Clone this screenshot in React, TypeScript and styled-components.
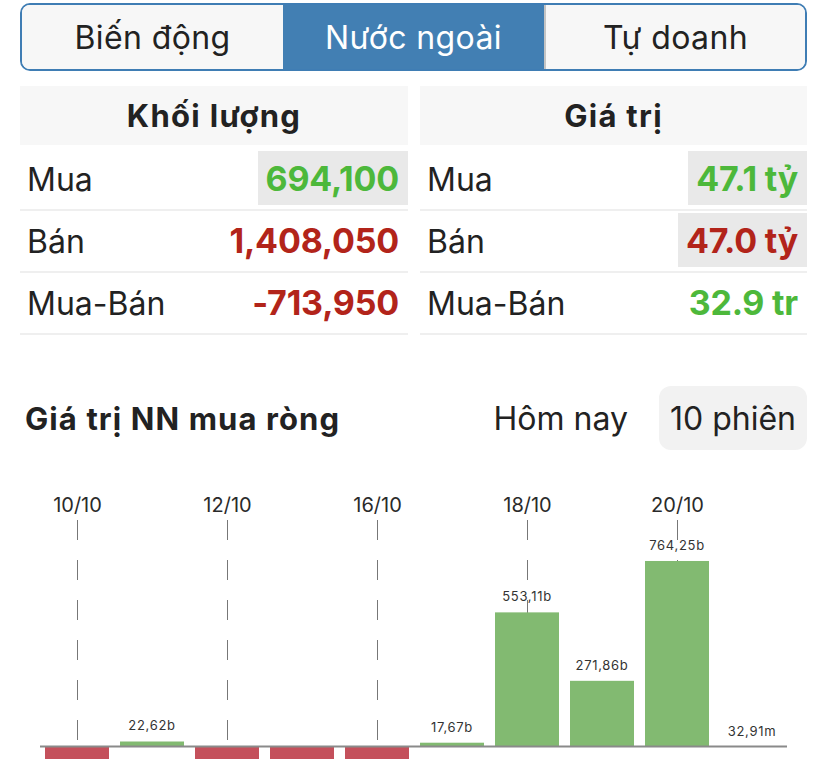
import React from "react";
import styled, { createGlobalStyle } from "styled-components";

const Global = createGlobalStyle`
  html, body { margin: 0; padding: 0; background: #ffffff; }
  body { font-family: Inter, "Noto Sans", "Liberation Sans", sans-serif; color: #222; }
`;

const Page = styled.div`
  width: 828px;
  display: flex;
  flex-direction: column;
  padding-top: 3px;
  overflow: hidden;
`;

const Tabs = styled.div`
  margin: 0 21px 0 20px;
  height: 68px;
  box-sizing: border-box;
  border: 2px solid #3f7db4;
  border-radius: 10px;
  overflow: hidden;
  display: grid;
  grid-template-columns: 1fr 1fr 1fr;
`;

const Tab = styled.div<{ $active?: boolean; $divider?: boolean }>`
  display: flex;
  align-items: center;
  justify-content: center;
  font-size: 32px;
  letter-spacing: 0.4px;
  background: ${(p) => (p.$active ? "#427fb3" : "#f7f7f7")};
  color: ${(p) => (p.$active ? "#ffffff" : "#222")};
  border-left: ${(p) => (p.$divider ? "2px solid #c4c4c4" : "none")};
`;

const Tables = styled.div`
  margin: 15px 21px 0 20px;
  display: grid;
  grid-template-columns: 388px 387px;
  column-gap: 12px;
`;

const Column = styled.div`
  display: flex;
  flex-direction: column;
`;

const Header = styled.div`
  height: 59px;
  background: #f7f7f7;
  display: flex;
  align-items: center;
  justify-content: center;
  font-size: 31px;
  font-weight: 700;
  letter-spacing: 1.3px;
  margin-bottom: 4px;
`;

const Row = styled.div`
  height: 62px;
  box-sizing: border-box;
  border-bottom: 2px solid #efefef;
  display: flex;
  align-items: center;
  justify-content: space-between;
  padding-left: 7px;
`;

const Label = styled.span`
  font-size: 32px;
`;

const Value = styled.span<{ $color: string; $bg?: boolean }>`
  height: 54px;
  margin-bottom: 4px;
  margin-top: 2px;
  display: flex;
  align-items: center;
  padding: 0 9px 0 8px;
  font-size: 34px;
  font-weight: 700;
  letter-spacing: -0.2px;
  color: ${(p) => p.$color};
  background: ${(p) => (p.$bg ? "#e9e9e9" : "transparent")};
`;

const ChartHead = styled.div`
  margin: 51px 21px 0 25px;
  height: 64px;
  display: flex;
  align-items: center;
`;

const ChartTitle = styled.div`
  flex: 1;
  font-size: 31px;
  font-weight: 700;
  letter-spacing: 1.1px;
`;

const Period = styled.div<{ $active?: boolean }>`
  height: 64px;
  display: flex;
  align-items: center;
  padding: 0 11px;
  font-size: 32px;
  border-radius: 12px;
  background: ${(p) => (p.$active ? "#f2f2f2" : "transparent")};
  margin-left: ${(p) => (p.$active ? "20px" : "0")};
`;

const ChartSvg = styled.svg`
  display: block;
  font-family: Inter, "Noto Sans", "Liberation Sans", sans-serif;
`;

const GREEN = "#4db83b";
const RED = "#b2241a";

const volume = [
  { label: "Mua", value: "694,100", color: GREEN, bg: true },
  { label: "Bán", value: "1,408,050", color: RED, bg: false },
  { label: "Mua-Bán", value: "-713,950", color: RED, bg: false },
];
const worth = [
  { label: "Mua", value: "47.1 tỷ", color: GREEN, bg: true },
  { label: "Bán", value: "47.0 tỷ", color: RED, bg: true },
  { label: "Mua-Bán", value: "32.9 tr", color: GREEN, bg: false },
];

const bars = [
  { v: -60, label: "" },
  { v: 22.62, label: "22,62b" },
  { v: -60, label: "" },
  { v: -60, label: "" },
  { v: -60, label: "" },
  { v: 17.67, label: "17,67b" },
  { v: 553.11, label: "553,11b" },
  { v: 271.86, label: "271,86b" },
  { v: 764.25, label: "764,25b" },
  { v: 0.03291, label: "32,91m" },
];
const dates: Record<number, string> = { 0: "10/10", 2: "12/10", 4: "16/10", 6: "18/10", 8: "20/10" };

const Chart: React.FC = () => {
  const base = 297;
  const scale = 0.2434;
  return (
    <ChartSvg width={828} height={320} viewBox="0 0 828 320">
      {bars.map((_, i) =>
        dates[i] ? (
          <g key={"d" + i}>
            <text x={77.5 + 75 * i} y={62} textAnchor="middle" fontSize={20} fill="#2a2a2a">
              {dates[i]}
            </text>
            <line
              x1={77.5 + 75 * i}
              x2={77.5 + 75 * i}
              y1={70}
              y2={base}
              stroke="#777"
              strokeWidth={1}
              strokeDasharray="20 20"
            />
          </g>
        ) : null
      )}
      {bars.map((b, i) => {
        const x = 45 + 75 * i;
        const h = Math.abs(b.v) * scale;
        const pos = b.v >= 0;
        return (
          <g key={"b" + i}>
            {h > 0.5 && (
              <rect
                x={x}
                y={pos ? base - h : base}
                width={64}
                height={h}
                fill={pos ? "#82ba71" : "#c4505b"}
              />
            )}
            {b.label && (
              <text
                x={x + 32}
                y={base - h - 11}
                textAnchor="middle"
                fontSize={13}
                letterSpacing={0.7}
                fill="#333"
              >
                {b.label}
              </text>
            )}
          </g>
        );
      })}
      <line x1={40} x2={787} y1={base - 0.5} y2={base - 0.5} stroke="#8a8a8a" strokeWidth={2} />
    </ChartSvg>
  );
};

export default function App() {
  return (
    <Page>
      <Global />
      <Tabs>
        <Tab>Biến động</Tab>
        <Tab $active>Nước ngoài</Tab>
        <Tab $divider>Tự doanh</Tab>
      </Tabs>
      <Tables>
        <Column>
          <Header>Khối lượng</Header>
          {volume.map((r) => (
            <Row key={r.label}>
              <Label>{r.label}</Label>
              <Value $color={r.color} $bg={r.bg}>{r.value}</Value>
            </Row>
          ))}
        </Column>
        <Column>
          <Header>Giá trị</Header>
          {worth.map((r) => (
            <Row key={r.label}>
              <Label>{r.label}</Label>
              <Value $color={r.color} $bg={r.bg}>{r.value}</Value>
            </Row>
          ))}
        </Column>
      </Tables>
      <ChartHead>
        <ChartTitle>Giá trị NN mua ròng</ChartTitle>
        <Period>Hôm nay</Period>
        <Period $active>10 phiên</Period>
      </ChartHead>
      <Chart />
    </Page>
  );
}
